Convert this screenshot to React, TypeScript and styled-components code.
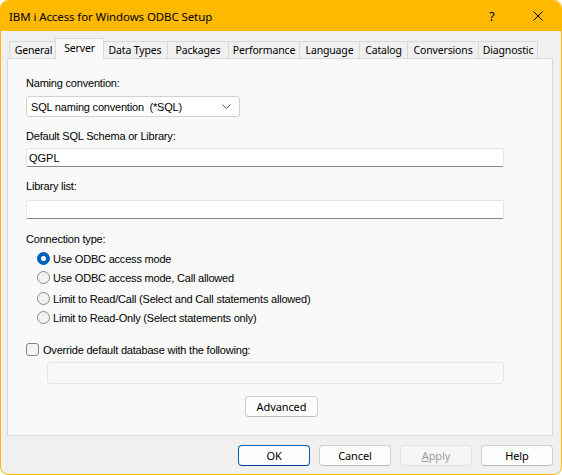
import React from "react";
import styled, { createGlobalStyle } from "styled-components";

const Global = createGlobalStyle`
  html, body { margin: 0; padding: 0; background: #ffffff; }
  #root { width: 562px; height: 475px; }
  * { box-sizing: border-box; }
`;

const UI = `"Noto Sans", "Open Sans", sans-serif`;
const CLASSIC = `"Liberation Sans", Arial, sans-serif`;

const Window = styled.div`
  width: 562px;
  height: 475px;
  border: 1px solid #ffb900;
  border-radius: 8px;
  overflow: hidden;
  background: #f0f0f0;
  display: flex;
  flex-direction: column;
`;

const TitleBar = styled.div`
  height: 30px;
  flex-shrink: 0;
  background: #ffb900;
  display: flex;
  align-items: center;
`;

const Title = styled.div`
  flex: 1;
  padding-left: 8px;
  font-family: ${UI};
  font-size: 11.5px;
  letter-spacing: -0.1px;
  color: #000;
`;

const CaptionButton = styled.div`
  width: 46px;
  height: 30px;
  display: flex;
  align-items: center;
  justify-content: center;
  font-family: ${UI};
  font-size: 12.5px;
  color: #000;
`;

const Body = styled.div`
  flex: 1;
  display: flex;
  flex-direction: column;
  padding: 7px 8px 0 6px;
`;

const TabRow = styled.div`
  height: 20px;
  display: flex;
  align-items: flex-end;
  padding-left: 2px;
`;

const Tab = styled.div<{ $w: number; $active?: boolean; $last?: boolean }>`
  width: ${(p) => (p.$active ? p.$w + 4 : p.$w)}px;
  height: ${(p) => (p.$active ? 21 : 17)}px;
  margin: ${(p) => (p.$active ? "0 -2px -1px -2px" : "0")};
  position: relative;
  z-index: ${(p) => (p.$active ? 1 : 0)};
  border: 1px solid #d9d9d9;
  border-bottom: none;
  border-right: ${(p) => (p.$active || p.$last ? "1px solid #d9d9d9" : "none")};
  background: ${(p) => (p.$active ? "#f9f9f9" : "#f0f0f0")};
  display: flex;
  align-items: ${(p) => (p.$active ? "flex-start" : "center")};
  padding-top: ${(p) => (p.$active ? "2px" : "0")};
  justify-content: center;
  font-family: ${UI};
  font-size: 10.5px;
  letter-spacing: -0.15px;
  line-height: 14px;
  color: #000;
  white-space: nowrap;
`;

const Panel = styled.div`
  height: 378px;
  border: 1px solid #d9d9d9;
  background: #f9f9f9;
  display: flex;
  flex-direction: column;
`;

const Form = styled.div`
  display: flex;
  flex-direction: column;
  align-items: flex-start;
  padding-left: 18px;
`;

const Label = styled.div<{ $top: number }>`
  margin-top: ${(p) => p.$top}px;
  height: 13px;
  font-family: ${CLASSIC};
  font-size: 11px;
  letter-spacing: -0.2px;
  line-height: 13px;
  color: #000;
  white-space: nowrap;
`;

const Select = styled.div`
  margin-top: 6px;
  width: 214px;
  height: 21px;
  background: #ffffff;
  border: 1px solid #d2d2d2;
  border-radius: 3px;
  display: flex;
  align-items: center;
  justify-content: space-between;
  padding: 0 8px 0 4px;
  font-family: ${CLASSIC};
  font-size: 11px;
  letter-spacing: -0.2px;
  color: #000;
  white-space: pre;
`;

const TextInput = styled.div<{ $top: number }>`
  margin-top: ${(p) => p.$top}px;
  width: 478px;
  height: 19px;
  background: #ffffff;
  border: 1px solid #e5e5e5;
  border-bottom: 1px solid #868686;
  border-radius: 2px;
  display: flex;
  align-items: center;
  padding-left: 2px;
  font-family: ${CLASSIC};
  font-size: 11px;
  color: #000;
`;

const RadioRow = styled.div<{ $top: number }>`
  margin-top: ${(p) => p.$top}px;
  margin-left: 11px;
  height: 19px;
  display: flex;
  align-items: center;
  gap: 3px;
  font-family: ${CLASSIC};
  font-size: 11px;
  letter-spacing: -0.2px;
  color: #000;
  white-space: nowrap;
`;

const RadioDot = styled.span<{ $checked?: boolean }>`
  width: 13px;
  height: 13px;
  border-radius: 50%;
  flex-shrink: 0;
  display: flex;
  align-items: center;
  justify-content: center;
  border: 1px solid ${(p) => (p.$checked ? "#005fb8" : "#8a8a8a")};
  background: ${(p) => (p.$checked ? "#005fb8" : "#f3f3f3")};
  &::after {
    content: "";
    width: 5px;
    height: 5px;
    border-radius: 50%;
    background: ${(p) => (p.$checked ? "#ffffff" : "transparent")};
  }
`;

const CheckRow = styled.div`
  margin-top: 13px;
  height: 19px;
  display: flex;
  align-items: center;
  gap: 4px;
  font-family: ${CLASSIC};
  font-size: 11px;
  letter-spacing: -0.2px;
  color: #000;
  white-space: nowrap;
`;

const CheckBox = styled.span`
  width: 13px;
  height: 13px;
  flex-shrink: 0;
  border: 1px solid #858585;
  border-radius: 3px;
  background: #f5f5f5;
`;

const DisabledInput = styled.div`
  margin-top: 3px;
  margin-left: 21px;
  width: 457px;
  height: 22px;
  background: #f9f9f9;
  border: 1px solid #e5e5e5;
  border-radius: 3px;
`;

const AdvancedRow = styled.div`
  margin-top: 12px;
  display: flex;
  justify-content: center;
  padding-left: 3px;
`;

const Button = styled.div<{ $w: number; $default?: boolean; $disabled?: boolean }>`
  width: ${(p) => p.$w}px;
  height: 21px;
  border-radius: 4px;
  border: 1px solid
    ${(p) => (p.$default ? "#005fb8" : p.$disabled ? "#e5e5e5" : "#d0d0d0")};
  border-bottom-color: ${(p) =>
    p.$default ? "#003e92" : p.$disabled ? "#e5e5e5" : "#bcbcbc"};
  background: ${(p) => (p.$disabled ? "#f5f5f5" : "#fdfdfd")};
  color: ${(p) => (p.$disabled ? "#a0a0a0" : "#000")};
  display: flex;
  align-items: center;
  justify-content: center;
  font-family: ${UI};
  font-size: 11px;
  letter-spacing: -0.1px;
`;

const Footer = styled.div`
  margin-top: 9px;
  display: flex;
  justify-content: flex-end;
  gap: 9px;
`;

const Chevron = () => (
  <svg width="9" height="5" viewBox="0 0 9 5">
    <path d="M0.5 0.5 L4.5 4.5 L8.5 0.5" fill="none" stroke="#5f5f5f" strokeWidth="1" />
  </svg>
);

const CloseIcon = () => (
  <svg width="10" height="10" viewBox="0 0 10 10">
    <path d="M0.5 0.5 L9.5 9.5 M9.5 0.5 L0.5 9.5" stroke="#000" strokeWidth="1" />
  </svg>
);

const tabs: { label: string; w: number }[] = [
  { label: "General", w: 48 },
  { label: "Server", w: 45 },
  { label: "Data Types", w: 65 },
  { label: "Packages", w: 61 },
  { label: "Performance", w: 71 },
  { label: "Language", w: 60 },
  { label: "Catalog", w: 48 },
  { label: "Conversions", w: 71 },
  { label: "Diagnostic", w: 60 },
];

const radios = [
  { label: "Use ODBC access mode", top: 3, checked: true },
  { label: "Use ODBC access mode, Call allowed", top: 0 },
  { label: "Limit to Read/Call (Select and Call statements allowed)", top: 2 },
  { label: "Limit to Read-Only (Select statements only)", top: 0 },
];

export default function App() {
  return (
    <>
      <Global />
      <Window>
        <TitleBar>
          <Title>IBM i Access for Windows ODBC Setup</Title>
          <CaptionButton>?</CaptionButton>
          <CaptionButton>
            <CloseIcon />
          </CaptionButton>
        </TitleBar>
        <Body>
          <TabRow>
            {tabs.map((t, i) => (
              <Tab key={t.label} $w={t.w} $active={t.label === "Server"} $last={i === tabs.length - 1}>
                {t.label}
              </Tab>
            ))}
          </TabRow>
          <Panel>
            <Form>
              <Label $top={18}>Naming convention:</Label>
              <Select>
                <span>SQL naming convention  (*SQL)</span>
                <Chevron />
              </Select>
              <Label $top={13}>Default SQL Schema or Library:</Label>
              <TextInput $top={5}>QGPL</TextInput>
              <Label $top={13}>Library list:</Label>
              <TextInput $top={7} />
              <Label $top={14}>Connection type:</Label>
              {radios.map((r) => (
                <RadioRow key={r.label} $top={r.top}>
                  <RadioDot $checked={r.checked} />
                  {r.label}
                </RadioRow>
              ))}
              <CheckRow>
                <CheckBox />
                Override default database with the following:
              </CheckRow>
              <DisabledInput />
            </Form>
            <AdvancedRow>
              <Button $w={73}>Advanced</Button>
            </AdvancedRow>
          </Panel>
          <Footer>
            <Button $w={72} $default>OK</Button>
            <Button $w={72}>Cancel</Button>
            <Button $w={72} $disabled>
              <span><u>A</u>pply</span>
            </Button>
            <Button $w={72}>Help</Button>
          </Footer>
        </Body>
      </Window>
    </>
  );
}
